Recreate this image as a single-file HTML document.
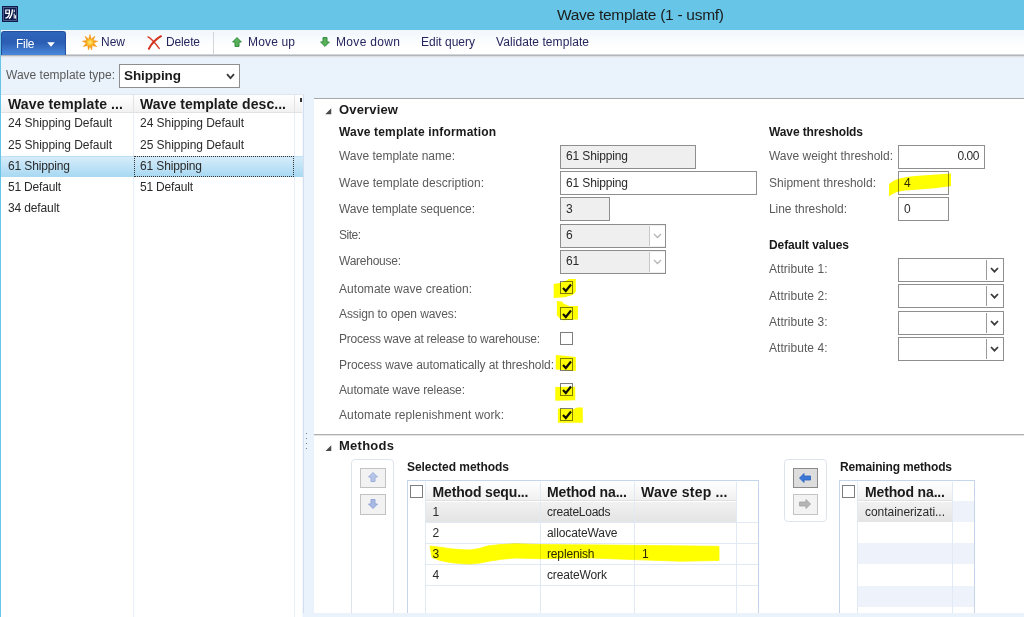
<!DOCTYPE html>
<html><head><meta charset="utf-8"><title>Wave template (1 - usmf)</title>
<style>
html,body{margin:0;padding:0;}
body{width:1024px;height:617px;overflow:hidden;position:relative;background:#eaf2fb;font-family:"Liberation Sans",sans-serif;font-size:12px;}
div,span,svg{position:absolute;box-sizing:border-box;}
.t{white-space:nowrap;line-height:20px;height:20px;}
#txt,#hl,#ui{left:0;top:0;width:1024px;height:617px;}
#hl{mix-blend-mode:multiply;}
.fld{border:1px solid #8e8e8e;background:#fff;}
.ro{background:#efefef;}
.cb{width:13px;height:13px;border:1px solid #7d7d7d;background:#fff;}
.vl{width:1px;background:#e1e9f5;}
.hline{height:1px;background:#e1e9f5;}

</style></head><body>
<div id="ui">
<!-- title bar -->
<div style="left:0;top:0;width:1024px;height:30px;background:#67c6e8;"></div>
<div style="left:0;top:30px;width:1px;height:587px;background:#67c6e8;"></div>
<!-- app icon -->
<svg style="left:2px;top:6px" width="16" height="16" viewBox="0 0 16 16"><rect width="16" height="16" fill="#0d1c4f"/><rect x="1.5" y="1.5" width="13" height="13" fill="none" stroke="#5c6a96" stroke-width="0.8"/><path d="M3.8 4h3.6v3.4H3.8zM7.4 7.4C7.2 10.2 6 11.6 3.4 12.2" stroke="#fff" stroke-width="1.2" fill="none"/><path d="M7 12.6C9.4 10.6 10.2 7.6 10.4 3.4" stroke="#fff" stroke-width="1.4" fill="none"/><path d="M12.2 3.6v2.6M12.2 7.6v5M13.6 9.2v3.4" stroke="#fff" stroke-width="1" fill="none"/></svg>
<!-- toolbar -->
<div style="left:1px;top:30px;width:1023px;height:24px;background:linear-gradient(#f1f6fc,#ffffff 70%);"></div>
<div style="left:1px;top:54px;width:1023px;height:1px;background:#d2d5d9;"></div>
<div style="left:1px;top:55px;width:1023px;height:1px;background:#b2b5ba;"></div>
<div style="left:1px;top:56px;width:1023px;height:1px;background:#dcdfe4;"></div>
<div style="left:1px;top:57px;width:1023px;height:1px;background:#e9edf3;"></div>
<div style="left:1px;top:31px;width:65px;height:24px;border-radius:3px 3px 0 0;background:linear-gradient(#2f66bc,#2a5db3 45%,#4a88db);border:1px solid #234f9e;border-bottom:none;"></div>
<svg style="left:47px;top:42px" width="8" height="5" viewBox="0 0 8 5"><path d="M0.2 0.3h7.6l-3.8 4.4z" fill="#fff"/></svg>
<div style="left:213px;top:32px;width:1px;height:22px;background:#d3d7dc;"></div>
<!-- New icon (sun) -->
<svg style="left:82px;top:34px" width="16" height="17" viewBox="0 0 16 17"><path d="M8 0.6L9.3 5.2L12.9 2.2L11.2 6.4L15.6 7.2L11.6 9L14.6 12.6L10.2 11.4L9.6 16L8 12L6.4 16L5.8 11.4L1.4 12.6L4.4 9L0.4 7.2L4.8 6.4L3.1 2.2L6.7 5.2Z" fill="#f39a17" stroke="#f39a17" stroke-width="0.6" stroke-linejoin="round"/><circle cx="8" cy="8.4" r="3.4" fill="#fdc02f"/><circle cx="8" cy="8.4" r="1.8" fill="#ffe066"/></svg>
<!-- Delete icon -->
<svg style="left:147px;top:35px" width="15" height="15" viewBox="0 0 17 17"><path d="M1.2 2.2C4.5 4 9.5 9.5 13.8 15.2" stroke="#d8402c" stroke-width="1.7" fill="none" stroke-linecap="round"/><path d="M15.8 1.4C10.5 4.5 5 10 2.2 15.6" stroke="#d2321f" stroke-width="2.3" fill="none" stroke-linecap="round"/></svg>
<!-- move up -->
<svg style="left:232px;top:37px" width="10" height="10" viewBox="0 0 10 10"><path d="M5 0.6L9.4 5H7v4.4H3V5H0.6z" fill="#58b058" stroke="#2f8a3a" stroke-width="1"/></svg>
<svg style="left:320px;top:37px" width="10" height="10" viewBox="0 0 10 10"><path d="M5 9.4L9.4 5H7V0.6H3V5H0.6z" fill="#58b058" stroke="#2f8a3a" stroke-width="1"/></svg>

<!-- filter select -->
<div class="fld" style="left:119px;top:64px;width:121px;height:24px;"></div>
<svg style="left:226px;top:73px" width="9" height="7" viewBox="0 0 9 7"><path d="M1 1.2l3.5 4L8 1.2" stroke="#3a3a3a" stroke-width="1.8" fill="none"/></svg>

<!-- left grid -->
<div style="left:1px;top:94px;width:302px;height:523px;background:#fff;"></div>
<div style="left:1px;top:94px;width:302px;height:1px;background:#dfe6f0;"></div>
<div style="left:1px;top:95px;width:302px;height:18px;background:linear-gradient(#ffffff,#f1f1f1);border-bottom:1px solid #e2e2e2;"></div>
<div style="left:133px;top:95px;width:1px;height:18px;background:#e3e3e3;"></div>
<div style="left:294px;top:95px;width:1px;height:18px;background:#e3e3e3;"></div>
<div class="vl" style="left:133px;top:113px;height:504px;background:#e8eef8;"></div>
<div class="vl" style="left:294px;top:113px;height:504px;background:#e8eef8;"></div>
<div style="left:302px;top:94px;width:1px;height:523px;background:#f4f8fd;"></div><div style="left:303px;top:94px;width:1px;height:523px;background:#d3dfee;"></div>
<!-- selected row -->
<div style="left:1px;top:156px;width:302px;height:21px;background:linear-gradient(#d6ecfa,#a7d8f2);border-top:1px solid #bfe0f4;"></div>
<div style="left:134px;top:156px;width:160px;height:21px;border:1px dotted #333;"></div>
<div style="left:300px;top:98px;width:2px;height:4px;background:#333;"></div>

<!-- right panel -->
<div style="left:314px;top:98px;width:710px;height:515px;background:#fff;border-top:1px solid #a8a8a8;"></div>
<div style="left:314px;top:434px;width:710px;height:1px;background:#b0b0b0;"></div>
<div style="left:314px;top:435px;width:710px;height:1px;background:#e4e4e4;"></div>
<!-- splitter dots -->
<div style="left:306px;top:432px;width:1px;height:18px;background:repeating-linear-gradient(transparent 0 1px,#7a7a7a 1px 2px,transparent 2px 5px);"></div>
<!-- expanders -->
<svg style="left:325px;top:108px" width="6.5" height="6.5" viewBox="0 0 7 7"><path d="M6.7 0.3v6.4H0.3z" fill="#4a4a4a"/></svg>
<svg style="left:325px;top:444.5px" width="6.5" height="6.5" viewBox="0 0 7 7"><path d="M6.7 0.3v6.4H0.3z" fill="#4a4a4a"/></svg>

<!-- fields -->
<div class="fld ro" style="left:560px;top:145px;width:136px;height:24px;"></div>
<div class="fld" style="left:560px;top:171px;width:197px;height:24px;"></div>
<div class="fld ro" style="left:560px;top:197px;width:50px;height:24px;"></div>
<div class="fld ro" style="left:560px;top:224px;width:106px;height:24px;"></div>
<div style="left:649px;top:226px;width:16px;height:20px;background:#fff;border-left:1px solid #c8c8c8;"></div>
<svg style="left:653px;top:233px" width="9" height="6" viewBox="0 0 9 6"><path d="M1 1l3.5 3.5L8 1" stroke="#b5b5b5" stroke-width="1.3" fill="none"/></svg>
<div class="fld ro" style="left:560px;top:250px;width:106px;height:24px;"></div>
<div style="left:649px;top:252px;width:16px;height:20px;background:#fff;border-left:1px solid #c8c8c8;"></div>
<svg style="left:653px;top:259px" width="9" height="6" viewBox="0 0 9 6"><path d="M1 1l3.5 3.5L8 1" stroke="#b5b5b5" stroke-width="1.3" fill="none"/></svg>

<!-- checkboxes -->
<div class="cb" style="left:560px;top:281px;"></div>
<div class="cb" style="left:560px;top:307px;"></div>
<div class="cb" style="left:560px;top:332px;"></div>
<div class="cb" style="left:560px;top:358px;"></div>
<div class="cb" style="left:560px;top:383px;"></div>
<div class="cb" style="left:560px;top:408px;"></div>
<svg class="ck" style="left:562px;top:283px" width="10" height="10" viewBox="0 0 10 10"><path d="M1 5l2.8 3L9 1.5" stroke="#111" stroke-width="2.2" fill="none"/></svg>
<svg class="ck" style="left:562px;top:309px" width="10" height="10" viewBox="0 0 10 10"><path d="M1 5l2.8 3L9 1.5" stroke="#111" stroke-width="2.2" fill="none"/></svg>
<svg class="ck" style="left:562px;top:360px" width="10" height="10" viewBox="0 0 10 10"><path d="M1 5l2.8 3L9 1.5" stroke="#111" stroke-width="2.2" fill="none"/></svg>
<svg class="ck" style="left:562px;top:385px" width="10" height="10" viewBox="0 0 10 10"><path d="M1 5l2.8 3L9 1.5" stroke="#111" stroke-width="2.2" fill="none"/></svg>
<svg class="ck" style="left:562px;top:410px" width="10" height="10" viewBox="0 0 10 10"><path d="M1 5l2.8 3L9 1.5" stroke="#111" stroke-width="2.2" fill="none"/></svg>

<!-- threshold fields -->
<div class="fld" style="left:898px;top:145px;width:87px;height:24px;"></div>
<div class="fld" style="left:898px;top:171px;width:51px;height:24px;"></div>
<div class="fld" style="left:898px;top:197px;width:51px;height:24px;"></div>
<!-- attribute combos -->
<div class="fld" style="left:898px;top:258px;width:106px;height:24px;"></div>
<div class="fld" style="left:898px;top:284px;width:106px;height:24px;"></div>
<div class="fld" style="left:898px;top:311px;width:106px;height:24px;"></div>
<div class="fld" style="left:898px;top:337px;width:106px;height:24px;"></div>
<div style="left:986px;top:260px;width:1px;height:20px;background:#9a9a9a;"></div>
<div style="left:986px;top:286px;width:1px;height:20px;background:#9a9a9a;"></div>
<div style="left:986px;top:313px;width:1px;height:20px;background:#9a9a9a;"></div>
<div style="left:986px;top:339px;width:1px;height:20px;background:#9a9a9a;"></div>
<svg style="left:990px;top:267px" width="9" height="6" viewBox="0 0 9 6"><path d="M1 1l3.5 3.7L8 1" stroke="#3a3a3a" stroke-width="1.7" fill="none"/></svg>
<svg style="left:990px;top:293px" width="9" height="6" viewBox="0 0 9 6"><path d="M1 1l3.5 3.7L8 1" stroke="#3a3a3a" stroke-width="1.7" fill="none"/></svg>
<svg style="left:990px;top:320px" width="9" height="6" viewBox="0 0 9 6"><path d="M1 1l3.5 3.7L8 1" stroke="#3a3a3a" stroke-width="1.7" fill="none"/></svg>
<svg style="left:990px;top:346px" width="9" height="6" viewBox="0 0 9 6"><path d="M1 1l3.5 3.7L8 1" stroke="#3a3a3a" stroke-width="1.7" fill="none"/></svg>

<!-- methods: up/down group -->
<div style="left:351px;top:459px;width:43px;height:160px;border:1px solid #dfe4ec;border-radius:4px;background:#fff;"></div>
<div style="left:360px;top:468px;width:26px;height:20px;border:1px solid #c2c2c2;background:#f2f2f2;"></div>
<div style="left:360px;top:494px;width:26px;height:21px;border:1px solid #c2c2c2;background:#f2f2f2;"></div>
<svg style="left:368px;top:472px" width="10" height="10" viewBox="0 0 10 10"><path d="M5 0.5L9.5 5H7v4.5H3V5H0.5z" fill="#b7c6e8" stroke="#95a8d8" stroke-width="0.9"/></svg>
<svg style="left:368px;top:499px" width="10" height="10" viewBox="0 0 10 10"><path d="M5 9.5L9.5 5H7V0.5H3V5H0.5z" fill="#a9bbe4" stroke="#8a9fd4" stroke-width="0.9"/></svg>

<!-- selected grid -->
<div style="left:407px;top:480px;width:352px;height:140px;border:1px solid #c5d5ea;background:#fff;"></div>
<div style="left:426px;top:482px;width:311px;height:19px;background:linear-gradient(#ffffff,#f0f0f0);border-bottom:1px solid #e0e0e0;"></div>
<div class="cb" style="left:410px;top:485px;"></div>
<div style="left:426px;top:502px;width:311px;height:20px;background:linear-gradient(#f1f1f1,#e4e4e4);"></div>
<div class="vl" style="left:425px;top:482px;height:135px;"></div>
<div class="vl" style="left:540px;top:482px;height:135px;"></div>
<div class="vl" style="left:634px;top:482px;height:135px;"></div>
<div class="vl" style="left:736px;top:482px;height:135px;"></div>
<div class="hline" style="left:426px;top:522px;width:332px;"></div>
<div class="hline" style="left:426px;top:543px;width:332px;"></div>
<div class="hline" style="left:426px;top:564px;width:332px;"></div>
<div class="hline" style="left:426px;top:585px;width:332px;"></div>

<!-- left/right group -->
<div style="left:784px;top:459px;width:43px;height:63px;border:1px solid #dfe4ec;border-radius:4px;background:#fff;"></div>
<div style="left:793px;top:468px;width:25px;height:20px;border:1px solid #8a8a8a;background:#dddddd;"></div>
<div style="left:793px;top:494px;width:25px;height:21px;border:1px solid #c4c4c4;background:#f3f3f3;"></div>
<svg style="left:799px;top:473px" width="12" height="10" viewBox="0 0 12 10"><path d="M0.5 5L5 0.5V3h6.5v4H5v2.5z" fill="#3c78d8" stroke="#2a5fc0" stroke-width="0.8"/></svg>
<svg style="left:799px;top:499px" width="12" height="10" viewBox="0 0 12 10"><path d="M11.5 5L7 0.5V3H0.5v4H7v2.5z" fill="#b5b5b5" stroke="#a0a0a0" stroke-width="0.8"/></svg>

<!-- remaining grid -->
<div style="left:839px;top:480px;width:136px;height:140px;border:1px solid #c5d5ea;background:#fff;"></div>
<div style="left:858px;top:543px;width:116px;height:21px;background:#edf2fb;"></div>
<div style="left:858px;top:586px;width:116px;height:21px;background:#edf2fb;"></div>
<div style="left:858px;top:482px;width:94px;height:19px;background:linear-gradient(#ffffff,#f0f0f0);border-bottom:1px solid #e0e0e0;"></div>
<div class="cb" style="left:842px;top:485px;"></div>
<div style="left:858px;top:502px;width:94px;height:20px;background:linear-gradient(#f1f1f1,#e4e4e4);"></div>
<div style="left:953px;top:501px;width:21px;height:21px;background:#edf2fb;"></div>
<div class="vl" style="left:857px;top:482px;height:135px;"></div>
<div class="vl" style="left:952px;top:482px;height:135px;"></div>

<!-- bottom strip -->
<div style="left:303px;top:613px;width:721px;height:4px;background:#eaf2fb;"></div>
</div>

<div id="txt">
<span class="t" id="t0" style="left:557px;top:5px;font-size:15.5px;font-weight:400;color:#1b1b1b;letter-spacing:-0.279px;">Wave template (1 - usmf)</span>
<span class="t" id="t1" style="left:16px;top:34px;font-size:12px;font-weight:400;color:#ffffff;letter-spacing:-0.281px;">File</span>
<span class="t" id="t2" style="left:101px;top:32px;font-size:12px;font-weight:400;color:#26265e;letter-spacing:-0.008px;">New</span>
<span class="t" id="t3" style="left:166px;top:32px;font-size:12px;font-weight:400;color:#26265e;letter-spacing:-0.138px;">Delete</span>
<span class="t" id="t4" style="left:248px;top:32px;font-size:12px;font-weight:400;color:#26265e;letter-spacing:0.161px;">Move up</span>
<span class="t" id="t5" style="left:336px;top:32px;font-size:12px;font-weight:400;color:#26265e;letter-spacing:0.328px;">Move down</span>
<span class="t" id="t6" style="left:421px;top:32px;font-size:12px;font-weight:400;color:#26265e;letter-spacing:-0.003px;">Edit query</span>
<span class="t" id="t7" style="left:496px;top:32px;font-size:12px;font-weight:400;color:#26265e;letter-spacing:0.072px;">Validate template</span>
<span class="t" id="t8" style="left:6px;top:65px;font-size:12px;font-weight:400;color:#5a5a5a;letter-spacing:0.003px;">Wave template type:</span>
<span class="t" id="t9" style="left:124px;top:66px;font-size:13.5px;font-weight:700;color:#1a1a1a;letter-spacing:-0.107px;">Shipping</span>
<span class="t" id="t10" style="left:8px;top:93.5px;font-size:14px;font-weight:700;color:#1a1a1a;letter-spacing:0.120px;">Wave template ...</span>
<span class="t" id="t11" style="left:140px;top:93.5px;font-size:14px;font-weight:700;color:#1a1a1a;letter-spacing:0.051px;">Wave template desc...</span>
<span class="t" id="t12" style="left:8px;top:113px;font-size:12px;font-weight:400;color:#2a2a2a;letter-spacing:-0.042px;">24 Shipping Default</span>
<span class="t" id="t13" style="left:140px;top:113px;font-size:12px;font-weight:400;color:#2a2a2a;letter-spacing:-0.042px;">24 Shipping Default</span>
<span class="t" id="t14" style="left:8px;top:134.5px;font-size:12px;font-weight:400;color:#2a2a2a;letter-spacing:-0.042px;">25 Shipping Default</span>
<span class="t" id="t15" style="left:140px;top:134.5px;font-size:12px;font-weight:400;color:#2a2a2a;letter-spacing:-0.042px;">25 Shipping Default</span>
<span class="t" id="t16" style="left:8px;top:156px;font-size:12px;font-weight:400;color:#2a2a2a;letter-spacing:-0.139px;">61 Shipping</span>
<span class="t" id="t17" style="left:140px;top:156px;font-size:12px;font-weight:400;color:#2a2a2a;letter-spacing:-0.139px;">61 Shipping</span>
<span class="t" id="t18" style="left:8px;top:177px;font-size:12px;font-weight:400;color:#2a2a2a;letter-spacing:-0.189px;">51 Default</span>
<span class="t" id="t19" style="left:140px;top:177px;font-size:12px;font-weight:400;color:#2a2a2a;letter-spacing:-0.189px;">51 Default</span>
<span class="t" id="t20" style="left:8px;top:198px;font-size:12px;font-weight:400;color:#2a2a2a;letter-spacing:-0.135px;">34 default</span>
<span class="t" id="t21" style="left:339px;top:99.5px;font-size:13px;font-weight:700;color:#1a1a1a;letter-spacing:0.167px;">Overview</span>
<span class="t" id="t22" style="left:339px;top:121.5px;font-size:12px;font-weight:700;color:#1a1a1a;letter-spacing:0.170px;">Wave template information</span>
<span class="t" id="t23" style="left:339px;top:145.5px;font-size:12px;font-weight:400;color:#5a5a5a;letter-spacing:-0.016px;">Wave template name:</span>
<span class="t" id="t24" style="left:339px;top:173px;font-size:12px;font-weight:400;color:#5a5a5a;letter-spacing:0.028px;">Wave template description:</span>
<span class="t" id="t25" style="left:339px;top:198.5px;font-size:12px;font-weight:400;color:#5a5a5a;letter-spacing:-0.105px;">Wave template sequence:</span>
<span class="t" id="t26" style="left:339px;top:225px;font-size:12px;font-weight:400;color:#5a5a5a;letter-spacing:-0.504px;">Site:</span>
<span class="t" id="t27" style="left:339px;top:251px;font-size:12px;font-weight:400;color:#5a5a5a;letter-spacing:-0.252px;">Warehouse:</span>
<span class="t" id="t28" style="left:339px;top:278.5px;font-size:12px;font-weight:400;color:#5a5a5a;letter-spacing:0.042px;">Automate wave creation:</span>
<span class="t" id="t29" style="left:339px;top:304px;font-size:12px;font-weight:400;color:#5a5a5a;letter-spacing:-0.104px;">Assign to open waves:</span>
<span class="t" id="t30" style="left:339px;top:329px;font-size:12px;font-weight:400;color:#5a5a5a;letter-spacing:-0.235px;">Process wave at release to warehouse:</span>
<span class="t" id="t31" style="left:339px;top:354.5px;font-size:12px;font-weight:400;color:#5a5a5a;letter-spacing:-0.062px;">Process wave automatically at threshold:</span>
<span class="t" id="t32" style="left:339px;top:380px;font-size:12px;font-weight:400;color:#5a5a5a;letter-spacing:-0.131px;">Automate wave release:</span>
<span class="t" id="t33" style="left:339px;top:405px;font-size:12px;font-weight:400;color:#5a5a5a;letter-spacing:0.108px;">Automate replenishment work:</span>
<span class="t" id="t34" style="left:566px;top:146px;font-size:12px;font-weight:400;color:#2a2a2a;letter-spacing:-0.139px;">61 Shipping</span>
<span class="t" id="t35" style="left:566px;top:172.5px;font-size:12px;font-weight:400;color:#2a2a2a;letter-spacing:-0.139px;">61 Shipping</span>
<span class="t" id="t36" style="left:566px;top:199px;font-size:12px;font-weight:400;color:#2a2a2a;letter-spacing:0.000px;">3</span>
<span class="t" id="t37" style="left:566px;top:225px;font-size:12px;font-weight:400;color:#2a2a2a;letter-spacing:0.000px;">6</span>
<span class="t" id="t38" style="left:566px;top:251px;font-size:12px;font-weight:400;color:#2a2a2a;letter-spacing:-0.059px;">61</span>
<span class="t" id="t39" style="left:769px;top:122px;font-size:12px;font-weight:700;color:#1a1a1a;letter-spacing:-0.113px;">Wave thresholds</span>
<span class="t" id="t40" style="left:769px;top:146px;font-size:12px;font-weight:400;color:#5a5a5a;letter-spacing:-0.014px;">Wave weight threshold:</span>
<span class="t" id="t41" style="left:769px;top:172.5px;font-size:12px;font-weight:400;color:#5a5a5a;letter-spacing:0.015px;">Shipment threshold:</span>
<span class="t" id="t42" style="left:769px;top:199px;font-size:12px;font-weight:400;color:#5a5a5a;letter-spacing:-0.052px;">Line threshold:</span>
<span class="t" id="t43" style="left:957.5px;top:146px;font-size:12px;font-weight:400;color:#2a2a2a;letter-spacing:-0.453px;">0.00</span>
<span class="t" id="t44" style="left:904px;top:172.5px;font-size:12px;font-weight:400;color:#2a2a2a;letter-spacing:0.000px;">4</span>
<span class="t" id="t45" style="left:904px;top:199px;font-size:12px;font-weight:400;color:#2a2a2a;letter-spacing:0.000px;">0</span>
<span class="t" id="t46" style="left:769px;top:235px;font-size:12px;font-weight:700;color:#1a1a1a;letter-spacing:-0.106px;">Default values</span>
<span class="t" id="t47" style="left:769px;top:259px;font-size:12px;font-weight:400;color:#5a5a5a;letter-spacing:0.043px;">Attribute 1:</span>
<span class="t" id="t48" style="left:769px;top:285.5px;font-size:12px;font-weight:400;color:#5a5a5a;letter-spacing:0.043px;">Attribute 2:</span>
<span class="t" id="t49" style="left:769px;top:312px;font-size:12px;font-weight:400;color:#5a5a5a;letter-spacing:0.043px;">Attribute 3:</span>
<span class="t" id="t50" style="left:769px;top:338px;font-size:12px;font-weight:400;color:#5a5a5a;letter-spacing:0.043px;">Attribute 4:</span>
<span class="t" id="t51" style="left:339px;top:436px;font-size:13px;font-weight:700;color:#1a1a1a;letter-spacing:0.258px;">Methods</span>
<span class="t" id="t52" style="left:407px;top:457px;font-size:12px;font-weight:700;color:#1a1a1a;letter-spacing:-0.047px;">Selected methods</span>
<span class="t" id="t53" style="left:432.5px;top:481.5px;font-size:14px;font-weight:700;color:#1a1a1a;letter-spacing:-0.154px;">Method sequ...</span>
<span class="t" id="t54" style="left:547px;top:481.5px;font-size:14px;font-weight:700;color:#1a1a1a;letter-spacing:-0.152px;">Method na...</span>
<span class="t" id="t55" style="left:641px;top:481.5px;font-size:14px;font-weight:700;color:#1a1a1a;letter-spacing:0.184px;">Wave step ...</span>
<span class="t" id="t56" style="left:432.5px;top:501.5px;font-size:12px;font-weight:400;color:#2a2a2a;letter-spacing:0.000px;">1</span>
<span class="t" id="t57" style="left:432.5px;top:522.5px;font-size:12px;font-weight:400;color:#2a2a2a;letter-spacing:0.000px;">2</span>
<span class="t" id="t58" style="left:432.5px;top:543.5px;font-size:12px;font-weight:400;color:#2a2a2a;letter-spacing:0.000px;">3</span>
<span class="t" id="t59" style="left:432.5px;top:565px;font-size:12px;font-weight:400;color:#2a2a2a;letter-spacing:0.000px;">4</span>
<span class="t" id="t60" style="left:547px;top:501.5px;font-size:12px;font-weight:400;color:#2a2a2a;letter-spacing:-0.255px;">createLoads</span>
<span class="t" id="t61" style="left:547px;top:522.5px;font-size:12px;font-weight:400;color:#2a2a2a;letter-spacing:-0.099px;">allocateWave</span>
<span class="t" id="t62" style="left:547px;top:543.5px;font-size:12px;font-weight:400;color:#2a2a2a;letter-spacing:-0.150px;">replenish</span>
<span class="t" id="t63" style="left:547px;top:565px;font-size:12px;font-weight:400;color:#2a2a2a;letter-spacing:-0.127px;">createWork</span>
<span class="t" id="t64" style="left:642px;top:543.5px;font-size:12px;font-weight:400;color:#2a2a2a;letter-spacing:0.000px;">1</span>
<span class="t" id="t65" style="left:840px;top:457px;font-size:12px;font-weight:700;color:#1a1a1a;letter-spacing:-0.168px;">Remaining methods</span>
<span class="t" id="t66" style="left:865px;top:481.5px;font-size:14px;font-weight:700;color:#1a1a1a;letter-spacing:-0.152px;">Method na...</span>
<span class="t" id="t67" style="left:865px;top:501.5px;font-size:12px;font-weight:400;color:#2a2a2a;letter-spacing:-0.045px;">containerizati...</span>
</div>
<div id="hl">
<svg style="left:0;top:0" width="1024" height="617" viewBox="0 0 1024 617">
<g fill="#ffff00">
<path d="M889 184 C895 179 903 177 915 176 L951 173.5 L951 186 C940 188 925 189 905 190.5 C898 191 893 193 889 196.5 Z"/>
<path d="M430 546 L440 547.2 L450 548.7 L460 549.6 L470 550 L479 548.6 L487.5 546 L500 544.6 L515 543.8 L540 544.5 L605 545 L717 546.3 L719 546.5 L719 560.5 L680 561.2 L640 559.8 L592 558 L540 558.7 L515 558 L502 559.2 L490 561 L480 563 L470 564 L460 563.6 L450 562.5 L440 560.4 L432 557.5 Z" stroke="#ffff00" stroke-width="0.8" stroke-linejoin="round"/>
<path d="M553.7 284.1 L559.8 282.9 L567.4 279.9 L568.2 278.9 L575.8 278.9 L575.8 292.1 L572.5 295.1 L564.9 297.2 L553.7 298 Z"/>
<path d="M556.9 301 L561.9 301.4 L563.6 303.5 L569.1 306 L577.9 305.9 L577.9 319.5 L563.2 320.2 L559 317.8 L556.9 315.3 Z"/>
<path d="M555.8 355 L564.4 355.7 L575.8 357 L575.8 370.9 L555.8 369.6 Z"/>
<path d="M555.3 387 L575.2 386.7 L575.2 400.3 L555.3 400.8 Z"/>
<path d="M557.9 408.4 L573.3 409.2 L577 407.5 L582.8 407.5 L582.8 422.7 L557.9 422.7 Z"/>
</g>
</svg>

</div>
</body></html>
